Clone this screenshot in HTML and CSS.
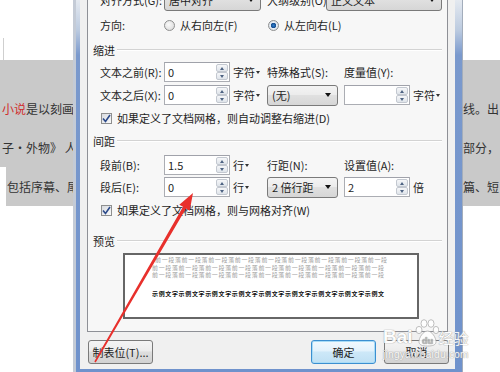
FILE: index.html
```html
<!DOCTYPE html>
<html lang="zh-CN">
<head>
    <meta charset="UTF-8">
    <meta name="viewport" content="width=device-width, initial-scale=1.0">
    <title>段落</title>
    <link rel="stylesheet" href="styles.css">
</head>
<body>
<div class="screen">
    <!-- 文档左侧 -->
    <div class="doc doc-left">
        <div class="doc-top"><i class="corner"></i></div>
        <div class="doc-band">
            <p class="doc-line"><span class="red">小说</span>是以刻画</p>
            <p class="doc-line">子·外物》 人</p>
        </div>
        <p class="doc-line doc-tail">包括序幕、尾</p>
    </div>

    <!-- 段落对话框 -->
    <div class="dialog">
        <div class="dialog-body">
            <div class="tab-page">
                <div class="row row-align">
                    <span class="lbl">对齐方式(G):</span>
                    <div class="select select-align"><span>居中对齐</span><i class="arrow"></i></div>
                    <span class="lbl-outline">大纲级别(O):</span>
                    <div class="select select-outline"><span>正文文本</span><i class="arrow"></i></div>
                </div>
                <div class="row row-dir">
                    <span class="lbl">方向:</span>
                    <div class="col-a"><span class="radio"></span>从右向左(F)</div>
                    <div class="col-b"><span class="radio on"></span>从左向右(L)</div>
                </div>

                <div class="group-title gt-indent">缩进</div>
                <div class="row">
                    <span class="lbl">文本之前(R):</span>
                    <div class="col-a">
                        <div class="spin"><span class="val">0</span><span class="spin-btns"><i class="up"></i><i class="down"></i></span></div>
                        <span class="unit">字符<i class="caret"></i></span>
                    </div>
                    <div class="col-b">特殊格式(S):</div>
                    <div class="col-c">度量值(Y):</div>
                </div>
                <div class="row">
                    <span class="lbl">文本之后(X):</span>
                    <div class="col-a">
                        <div class="spin"><span class="val">0</span><span class="spin-btns"><i class="up"></i><i class="down"></i></span></div>
                        <span class="unit">字符<i class="caret"></i></span>
                    </div>
                    <div class="col-b"><div class="select select-small"><span>(无)</span><i class="arrow"></i></div></div>
                    <div class="col-c">
                        <div class="spin"><span class="val"></span><span class="spin-btns"><i class="up"></i><i class="down"></i></span></div>
                        <span class="unit">字符<i class="caret"></i></span>
                    </div>
                </div>
                <div class="row row-check">
                    <span class="check"><svg width="9" height="9" viewBox="0 0 9 9"><path d="M1 4.5 L3.5 7.5 L8 1" fill="none" stroke="#2b4a8a" stroke-width="1.6"/></svg></span>
                    如果定义了文档网格，则自动调整右缩进(D)
                </div>

                <div class="group-title gt-space">间距</div>
                <div class="row row-before">
                    <span class="lbl">段前(B):</span>
                    <div class="col-a">
                        <div class="spin"><span class="val">1.5</span><span class="spin-btns"><i class="up"></i><i class="down"></i></span></div>
                        <span class="unit">行<i class="caret"></i></span>
                    </div>
                    <div class="col-b">行距(N):</div>
                    <div class="col-c">设置值(A):</div>
                </div>
                <div class="row row-after">
                    <span class="lbl">段后(E):</span>
                    <div class="col-a">
                        <div class="spin"><span class="val">0</span><span class="spin-btns"><i class="up"></i><i class="down"></i></span></div>
                        <span class="unit">行<i class="caret"></i></span>
                    </div>
                    <div class="col-b"><div class="select select-small"><span>2 倍行距</span><i class="arrow"></i></div></div>
                    <div class="col-c">
                        <div class="spin"><span class="val">2</span><span class="spin-btns"><i class="up"></i><i class="down"></i></span></div>
                        <span class="unit">倍</span>
                    </div>
                </div>
                <div class="row row-check">
                    <span class="check"><svg width="9" height="9" viewBox="0 0 9 9"><path d="M1 4.5 L3.5 7.5 L8 1" fill="none" stroke="#2b4a8a" stroke-width="1.6"/></svg></span>
                    如果定义了文档网格，则与网格对齐(W)
                </div>

                <div class="group-title gt-preview">预览</div>
                <div class="preview">
                    <div class="pv-prev first">前一段落前一段落前一段落前一段落前一段落前一段落前一段落前一段落前一段</div>
                    <div class="pv-prev">前一段落前一段落前一段落前一段落前一段落前一段落前一段落前一段落前一段</div>
                    <div class="pv-prev">前一段落前一段落前一段落前一段落前一段落前一段落前一段落前一段落前一段</div>
                    <div class="pv-cur">示例文字示例文字示例文字示例文字示例文字示例文字示例文字示例文字示例文</div>
                </div>
            </div>

            <div class="buttons">
                <button class="btn btn-tabs">制表位(T)...</button>
                <button class="btn btn-ok">确定</button>
                <button class="btn">取消</button>
            </div>
        </div>
    </div>

    <!-- 文档右侧 -->
    <div class="doc doc-right">
        <div class="doc-top"></div>
        <div class="doc-band">
            <p class="doc-line">线。出自</p>
            <p class="doc-line">部分，</p>
            <p class="doc-line">篇、短</p>
        </div>
    </div>

    <!-- 红色箭头 -->
    <svg class="arrow-mark" width="500" height="372" viewBox="0 0 500 372">
        <polygon points="94.3,361.6 183,206.8 179.3,204.7 193,193 189.7,210.7 186,208.6 95.7,362.4" fill="#e8302c"/>
    </svg>

    <!-- 水印 -->
    <div class="watermark">
        <div class="wm-top">
            <span class="wm-bai">Bai</span>
            <svg class="wm-paw" width="24" height="28" viewBox="0 0 24 28">
                <ellipse cx="4" cy="11" rx="3" ry="3.6" />
                <ellipse cx="9" cy="4.5" rx="3" ry="3.8" />
                <ellipse cx="16" cy="4.5" rx="3" ry="3.8" />
                <ellipse cx="21" cy="11" rx="2.8" ry="3.6" />
                <path d="M12.5 12 C8 12 4 19 4 22.5 C4 26 7 27 12.5 27 C18 27 21 26 21 22.5 C21 19 17 12 12.5 12 Z" />
                <text x="12.5" y="25" text-anchor="middle">du</text>
            </svg>
            <span class="wm-jy">经验</span>
        </div>
        <div class="wm-url">jingyan.baidu.com</div>
    </div>
</div>
</body>
</html>
```

FILE: styles.css
```css
* {
    box-sizing: border-box;
}

body {
    margin: 0;
    font-family: "Noto Sans CJK SC", "Liberation Sans", sans-serif;
    font-size: 11px;
    color: #1e1e1e;
}

.screen {
    position: relative;
    width: 500px;
    height: 372px;
    overflow: hidden;
    display: flex;
    background: #fff;
}

/* document behind the dialog */
.doc {
    flex: none;
    overflow: hidden;
    white-space: nowrap;
    font-size: 12px;
    color: #333;
}

.doc-left {
    width: 73px;
}

.doc-right {
    width: 37px;
}

.doc-top {
    height: 60px;
    padding: 38px 0 0 3px;
}

.corner {
    display: block;
    width: 1px;
    height: 22px;
    background: #cfcfcf;
}

.doc-band {
    background: #c9c9c9;
    padding-top: 29px;
}

.doc-line {
    margin: 0;
    height: 39px;
    line-height: 39px;
    padding-left: 2px;
}

.doc-right .doc-line {
    padding-left: 0;
}

.doc-tail {
    margin-left: 6px;
    padding-left: 1px;
    background: #c9c9c9;
}

.red {
    color: #d02d2d;
}

/* dialog window */
.dialog {
    flex: none;
    width: 390px;
    height: 372px;
    display: flex;
    flex-direction: column;
    padding: 0 7px 3px 4px;
    border-left: 3px solid #c4cbd6;
    border-right: 1px solid #a3adbb;
    background: linear-gradient(#e4e9f0 0, #bccbe0 30px, #7a99cd 55px, #6f92cc 100%);
}

.dialog-body {
    flex: 1;
    display: flex;
    flex-direction: column;
    background: #f0f0f0;
    padding: 0 7px;
    overflow: hidden;
}

.tab-page {
    margin-top: -11px;
    background: #f7f7f7;
    border: 1px solid #8e9096;
    border-top: 0;
    padding: 0 5px 12px;
    display: flex;
    flex-direction: column;
}

.row {
    display: flex;
    align-items: center;
    height: 20px;
    margin-top: 3px;
    padding-left: 7px;
    white-space: nowrap;
}

.row-align {
    height: 22px;
    margin-top: 0;
}

.row-dir {
    margin-top: 4px;
}

.row-before {
    margin-top: 5px;
}

.row-after {
    margin-top: 2px;
}

.lbl {
    width: 64px;
    flex: none;
}

.col-a {
    width: 103px;
    flex: none;
    display: flex;
    align-items: center;
}

.col-b {
    width: 77px;
    flex: none;
    display: flex;
    align-items: center;
}

.col-c {
    display: flex;
    align-items: center;
}

/* group titles with rule */
.group-title {
    display: flex;
    align-items: center;
    height: 18px;
}

.group-title::after {
    content: "";
    flex: 1;
    margin-left: 2px;
    border-top: 1px solid #d3d3d3;
    border-bottom: 1px solid #fff;
}

.gt-indent {
    margin-top: 6px;
}

.gt-space {
    margin-top: 4px;
}

.gt-preview {
    margin-top: 12px;
}

/* combo boxes */
.select {
    height: 21px;
    display: flex;
    align-items: center;
    justify-content: space-between;
    padding: 0 6px 0 4px;
    border: 1px solid #7a7a7a;
    border-radius: 3px;
    background: linear-gradient(#f4f4f4 0, #ececec 45%, #e0e0e0 50%, #d6d6d6 100%);
}

.select-align {
    width: 97px;
    height: 22px;
}

.lbl-outline {
    margin-left: 6px;
    width: 59px;
}

.select-outline {
    width: 116px;
    height: 22px;
}

.select-small {
    width: 71px;
}

.arrow {
    border-left: 3.5px solid transparent;
    border-right: 3.5px solid transparent;
    border-top: 4px solid #111;
}

/* radio and checkbox */
.radio {
    width: 11px;
    height: 11px;
    margin: 0 5px 0 0;
    border-radius: 50%;
    border: 1px solid #8e8f8f;
    background: radial-gradient(circle at 40% 40%, #fafafa 0, #d6d6d6 100%);
}

.col-b .radio {
    margin-left: 1px;
}

.radio.on {
    background: radial-gradient(circle, #2a7fcf 0, #174a8c 2.5px, #e8eef5 3px, #c8d0da 100%);
}

.row-check {
    padding-left: 8px;
}

.check {
    width: 11px;
    height: 11px;
    margin-right: 5px;
    border: 1px solid #8e8f8f;
    background: linear-gradient(135deg, #d8dbe0, #fafafa);
    display: flex;
    align-items: center;
    justify-content: center;
}

/* spinner inputs */
.spin {
    width: 66px;
    height: 20px;
    display: flex;
    border: 1px solid #abadb3;
    border-top-color: #a0a2aa;
    background: #fff;
}

.val {
    flex: 1;
    padding-left: 3px;
    line-height: 18px;
}

.spin-btns {
    width: 13px;
    display: flex;
    flex-direction: column;
    padding: 1px 1px 1px 0;
}

.spin-btns i {
    flex: 1;
    display: flex;
    align-items: center;
    justify-content: center;
    background: linear-gradient(#f6f7f9, #dfe4ea);
    border: 1px solid #c3c8d0;
    border-radius: 2px;
}

.spin-btns i::before {
    content: "";
    border-left: 2.5px solid transparent;
    border-right: 2.5px solid transparent;
}

.spin-btns .up::before {
    border-bottom: 3px solid #4d6282;
}

.spin-btns .down::before {
    border-top: 3px solid #4d6282;
}

.unit {
    margin-left: 3px;
    display: flex;
    align-items: center;
}

.caret {
    margin-left: 1px;
    border-left: 2.5px solid transparent;
    border-right: 2.5px solid transparent;
    border-top: 3px solid #333;
}

/* preview box */
.preview {
    margin: 3px 0 0 30px;
    width: 296px;
    height: 66px;
    border: 2px solid #666;
    background: #fff;
    padding: 1px 0 0 27px;
    font-size: 6px;
    overflow: hidden;
}

.pv-prev,
.pv-cur {
    width: 236px;
    height: 7.5px;
    line-height: 7.5px;
    letter-spacing: 0.65px;
    white-space: nowrap;
    overflow: hidden;
}

.pv-prev {
    color: #a0a0a0;
}

.pv-prev.first {
    padding-left: 3px;
}

.pv-cur {
    margin-top: 11px;
    color: #111;
    font-weight: bold;
}

/* buttons */
.buttons {
    display: flex;
    gap: 8px;
    margin: 8px -1px 0 1px;
}

.btn {
    width: 65px;
    height: 24px;
    padding: 0;
    font-family: inherit;
    font-size: 11px;
    color: #1e1e1e;
    border: 1px solid #7a7a7a;
    border-radius: 3px;
    background: linear-gradient(#f4f4f4 0, #ececec 45%, #dedede 50%, #d2d2d2 100%);
}

.btn-tabs {
    margin-right: auto;
}

.btn-ok {
    border-color: #3c8fd0;
    box-shadow: inset 0 0 0 1px #a8dcf7;
    background: linear-gradient(#f2f9fe 0, #e3f2fc 45%, #cde8f8 50%, #bfe0f4 100%);
}

/* overlays */
.arrow-mark {
    position: absolute;
    left: 0;
    top: 0;
    pointer-events: none;
}

.watermark {
    position: absolute;
    left: 383px;
    top: 317px;
    color: #fff;
    font-family: "Liberation Sans", sans-serif;
    text-shadow: 0 0 1px #9a9a9a, 0 0 1px #9a9a9a;
    opacity: 0.9;
}

.wm-top {
    display: flex;
    align-items: flex-end;
    height: 29px;
}

.wm-bai {
    font-size: 19px;
    font-weight: bold;
    line-height: 19px;
}

.wm-paw {
    margin: 0 0 -1px 2px;
    fill: #fff;
    stroke: #a8a8a8;
    stroke-width: 0.8;
}

.wm-paw text {
    font-size: 9px;
    font-weight: bold;
    fill: #b5b5b5;
    stroke: none;
}

.wm-jy {
    font-family: "Noto Sans CJK SC", sans-serif;
    font-size: 15px;
    line-height: 17px;
}

.wm-url {
    font-size: 10px;
    line-height: 12px;
    margin-top: 3px;
    letter-spacing: 0.3px;
}
```
